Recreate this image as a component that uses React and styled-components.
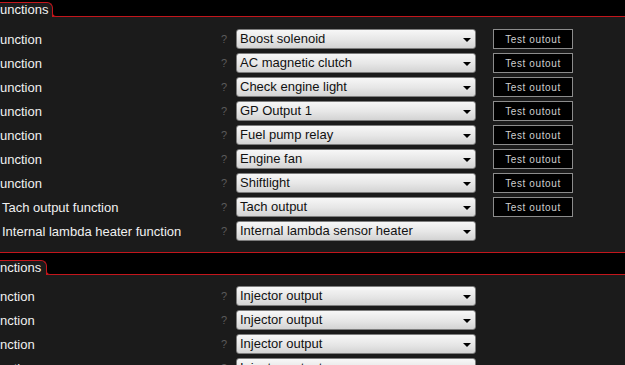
import React from "react";
import styled, { createGlobalStyle } from "styled-components";

const Global = createGlobalStyle`
    html, body {
        margin: 0;
        padding: 0;
        background: #1b1b1b;
        overflow: hidden;
    }
    body {
        font-family: "Liberation Sans", Arial, sans-serif;
    }
`;

const Page = styled.div`
    width: 625px;
    height: 365px;
    overflow: hidden;
    background: #1b1b1b;
`;

const Header = styled.div`
    display: flex;
    align-items: flex-end;
    height: ${(p) => p.$height}px;
    background: #000;
    border-top: ${(p) => (p.$topLine ? "1px solid #c3161c" : "none")};
    border-bottom: 1px solid #c3161c;
`;

const Tab = styled.div`
    position: relative;
    height: 13px;
    width: ${(p) => p.$width}px;
    margin-bottom: -1px;
    padding-bottom: 1px;
    background: #1b1b1b;
    border-top: 1px solid #c3161c;
    border-right: 1px solid #c3161c;
    border-top-right-radius: 6px;
    color: #f2f2f2;
    font-size: 13px;
    line-height: 14px;
    white-space: nowrap;
    &::after {
        content: "";
        position: absolute;
        right: -5px;
        bottom: 0;
        width: 4px;
        height: 4px;
        border-bottom-left-radius: 4px;
        border-left: 1px solid #c3161c;
        border-bottom: 1px solid #c3161c;
        background: #000;
    }
`;

const Body = styled.div`
    padding: ${(p) => p.$pad};
`;

const Row = styled.div`
    display: grid;
    grid-template-columns: 218px 18px 240px 17px 80px;
    align-items: center;
    height: 24px;
`;

const Label = styled.div`
    color: #f0f0f0;
    font-size: 13px;
    white-space: nowrap;
    padding-left: ${(p) => (p.$cut ? 0 : 2)}px;
`;

const Help = styled.div`
    color: #5c5c5c;
    font-size: 11px;
    padding-left: 3px;
`;

const Select = styled.div`
    position: relative;
    height: 18px;
    border: 1px solid #7d7d7d;
    border-radius: 3px;
    background: linear-gradient(#f7f7f7, #e6e6e6 55%, #d3d3d3);
    color: #111;
    font-size: 13px;
    line-height: 18px;
    padding-left: 3px;
    white-space: nowrap;
    &::after {
        content: "";
        position: absolute;
        right: 4px;
        top: 8px;
        border-left: 4px solid transparent;
        border-right: 4px solid transparent;
        border-top: 4px solid #000;
    }
`;

const TestButton = styled.div`
    grid-column: 5;
    height: 18px;
    border: 1px solid #8c8c8c;
    background: #000;
    color: #cfcfcf;
    font-size: 10px;
    letter-spacing: 0.6px;
    line-height: 19px;
    text-align: center;
`;

const outputs = [
    { label: "unction", cut: true, value: "Boost solenoid", test: true },
    { label: "unction", cut: true, value: "AC magnetic clutch", test: true },
    { label: "unction", cut: true, value: "Check engine light", test: true },
    { label: "unction", cut: true, value: "GP Output 1", test: true },
    { label: "unction", cut: true, value: "Fuel pump relay", test: true },
    { label: "unction", cut: true, value: "Engine fan", test: true },
    { label: "unction", cut: true, value: "Shiftlight", test: true },
    { label: "Tach output function", value: "Tach output", test: true },
    { label: "Internal lambda heater function", value: "Internal lambda sensor heater" },
];

const injectors = ["Injector output", "Injector output", "Injector output", "Injector output"];

function FunctionRow({ label, cut, value, test }) {
    return (
        <Row>
            <Label $cut={cut}>{label}</Label>
            <Help>?</Help>
            <Select>{value}</Select>
            {test && <TestButton>Test outout</TestButton>}
        </Row>
    );
}

export default function App() {
    return (
        <Page>
            <Global />
            <Header $height={16}>
                <Tab $width={52}>unctions</Tab>
            </Header>
            <Body $pad="10px 0 9px">
                {outputs.map((o, i) => (
                    <FunctionRow key={i} {...o} />
                ))}
            </Body>
            <Header $height={21} $topLine>
                <Tab $width={46}>nctions</Tab>
            </Header>
            <Body $pad="9px 0 0">
                {injectors.map((v, i) => (
                    <FunctionRow key={i} label="nction" cut value={v} />
                ))}
            </Body>
        </Page>
    );
}
